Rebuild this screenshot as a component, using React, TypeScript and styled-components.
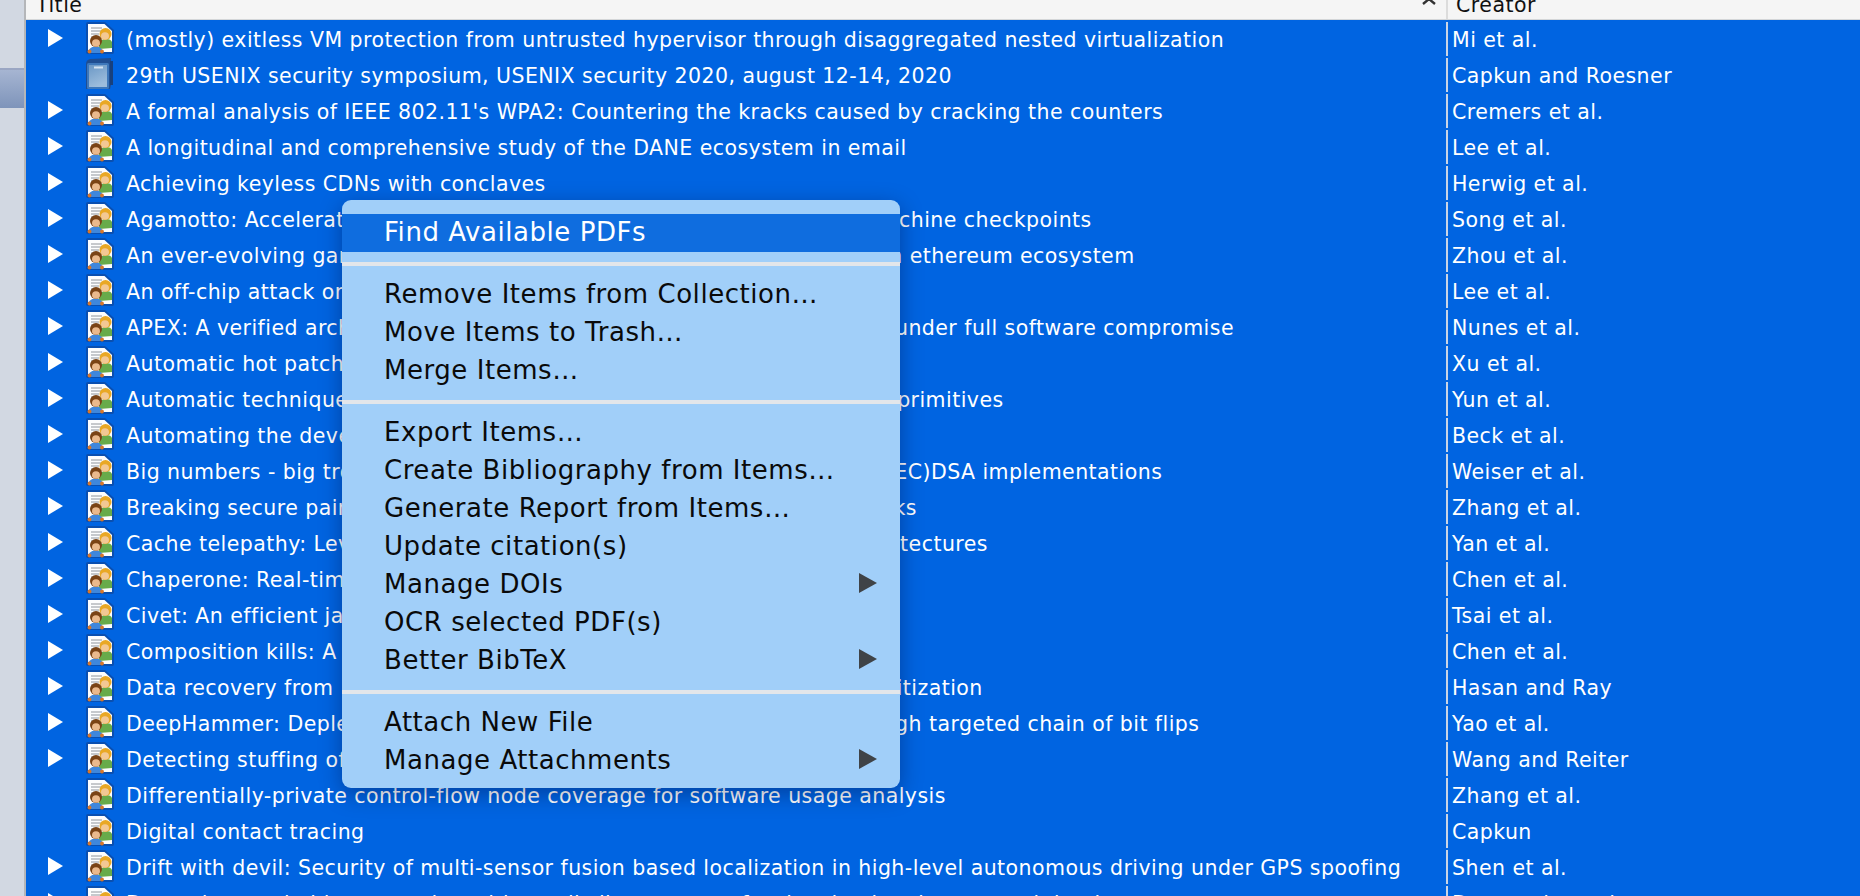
import React from "react";
import styled, { createGlobalStyle } from "styled-components";

const Global = createGlobalStyle`
  html, body { margin: 0; padding: 0; height: 100%; overflow: hidden; background: #0064e1; }
  #root { height: 896px; width: 1860px; }
`;

const font = `"DejaVu Sans", "Liberation Sans", sans-serif`;

const Page = styled.div`
  display: flex;
  width: 1860px;
  height: 896px;
  overflow: hidden;
  position: relative;
  font-family: ${font};
`;
const Sidebar = styled.div`
  width: 24px;
  flex: none;
  background: #d2d8e2;
  border-right: 2px solid #b4b6b9;
  padding-top: 68px;
`;
const SideSelection = styled.div`
  height: 40px;
  background: linear-gradient(#9aa6c3 0, #9aa6c3 2px, #a6b5d2 2px, #7e94ba 100%);
`;
const Main = styled.div`
  flex: 1;
  min-width: 0;
  display: flex;
  flex-direction: column;
`;
const Header = styled.div`
  height: 19px;
  flex: none;
  background: #f5f5f5;
  border-bottom: 1px solid #d4d6d8;
  display: flex;
  overflow: hidden;
`;
const TitleHead = styled.div`
  width: 1420px;
  flex: none;
  display: flex;
  justify-content: space-between;
  padding-left: 10px;
  box-sizing: border-box;
  font-size: 20.5px;
  letter-spacing: 0.5px;
  line-height: 19px;
  color: #111;
  margin-top: -4px;
  height: 23px;
`;
const Caret = styled.svg`
  width: 16px;
  height: 10px;
  margin: 1px 9px 0 0;
`;
const CreatorHead = styled.div`
  border-left: 2px solid #dcdcdc;
  padding-left: 8px;
  font-size: 20.5px;
  letter-spacing: 0.5px;
  line-height: 19px;
  color: #111;
  height: 19px;
`;
const CreatorLabel = styled.span`
  display: block;
  margin-top: -4px;
`;
const List = styled.div`
  flex: 1;
  background: #0064e1;
`;
const Row = styled.div`
  display: flex;
  height: 36px;
  align-items: stretch;
  color: #fff;
  font-size: 20.5px;
  letter-spacing: 0.45px;
`;
const TitleCell = styled.div`
  width: 1420px;
  flex: none;
  display: flex;
  align-items: center;
  white-space: nowrap;
  overflow: hidden;
`;
const TitleText = styled.span`
  padding-top: 4px;
`;
const Twisty = styled.svg`
  width: 15px;
  height: 18px;
  margin-left: 22px;
  flex: none;
`;
const TwistyGap = styled.div`
  width: 15px;
  margin-left: 22px;
  flex: none;
`;
const IconBox = styled.svg`
  width: 28px;
  height: 32px;
  margin-left: 23px;
  margin-right: 12px;
  flex: none;
`;
const CreatorCell = styled.div`
  flex: 1;
  display: flex;
  align-items: center;
  padding: 2px 0 0 4px;
  margin-top: 2px;
  border-left: 2px solid #c9d4e6;
  white-space: nowrap;
`;
const Menu = styled.div`
  position: absolute;
  left: 342px;
  top: 200px;
  width: 558px;
  height: 588px;
  box-sizing: border-box;
  padding-top: 14px;
  background: #a1cff9;
  border-radius: 9px;
  box-shadow: 0 6px 22px rgba(0, 0, 40, 0.35);
  font-size: 26px;
  letter-spacing: 0.55px;
  color: #0a0a0a;
`;
const MenuItem = styled.div<{ $active?: boolean }>`
  height: 38px;
  box-sizing: border-box;
  padding: 0 23px 2px 42px;
  display: flex;
  align-items: center;
  justify-content: space-between;
  white-space: nowrap;
  background: ${(p) => (p.$active ? "#0f6ddf" : "transparent")};
  color: ${(p) => (p.$active ? "#fff" : "#0a0a0a")};
`;
const Separator = styled.div`
  height: 4px;
  background: #e3e6ea;
  margin: 10px 0;
`;
const SubArrow = styled.svg`
  width: 18px;
  height: 20px;
  flex: none;
  margin-bottom: 2px;
`;

const PersonIcon = () => (
  <IconBox viewBox="0 0 28 32">
    <path d="M0 2 Q0 0 2 0 H19 L28 8 V30 Q28 32 26 32 H2 Q0 32 0 30 Z" fill="#0a4fb0" />
    <path d="M2 2 H18.5 L26 9 V30 H2 Z" fill="#fcfdfe" />
    <path d="M5 6 H16 M5 9 H15 M5 12 H13 M5 15 H10" stroke="#b4b8bd" strokeWidth="1.7" />
    <path d="M13 27 L13 21 Q15 17 20 17 Q25 17 26 20 L26 26 Z" fill="#67ab4a" />
    <circle cx="19.5" cy="12" r="6" fill="#e9a825" />
    <ellipse cx="19" cy="14" rx="4" ry="3.8" fill="#f3c894" />
    <path d="M2.5 31 Q2 25 9.5 24.5 Q17 25 17 31 Z" fill="#3f87dc" />
    <circle cx="10" cy="19" r="6" fill="#7a4315" />
    <ellipse cx="10" cy="21" rx="4" ry="3.8" fill="#eab98c" />
    <circle cx="3.5" cy="29.5" r="1.9" fill="#d9772a" />
    <circle cx="16" cy="29.5" r="1.9" fill="#d9772a" />
  </IconBox>
);
const BookIcon = () => (
  <IconBox viewBox="0 0 28 32">
    <defs>
      <linearGradient id="bookFill" x1="0" y1="0" x2="0.4" y2="1">
        <stop offset="0" stopColor="#6b98c6" />
        <stop offset="1" stopColor="#9dbddc" />
      </linearGradient>
    </defs>
    <path d="M0 6 Q0 2 4 1 L25 0 V27 L24 31 H0 Z" fill="#1f4e92" />
    <rect x="1" y="5" width="22" height="26" rx="1.5" fill="#3e78bb" />
    <rect x="3" y="7" width="18" height="22" fill="url(#bookFill)" />
    <rect x="8" y="8.5" width="9" height="2" fill="#d6e4f1" />
    <rect x="24" y="3" width="3" height="24" fill="#18407c" />
  </IconBox>
);
const TwistyIcon = () => (
  <Twisty viewBox="0 0 15 18">
    <path d="M0 0 L15 9 L0 18 Z" fill="#fff" />
  </Twisty>
);

type Item = { t: string; c: string; twisty?: boolean; book?: boolean };
const rows: Item[] = [
  { t: "(mostly) exitless VM protection from untrusted hypervisor through disaggregated nested virtualization", c: "Mi et al.", twisty: true },
  { t: "29th USENIX security symposium, USENIX security 2020, august 12-14, 2020", c: "Capkun and Roesner", book: true },
  { t: "A formal analysis of IEEE 802.11's WPA2: Countering the kracks caused by cracking the counters", c: "Cremers et al.", twisty: true },
  { t: "A longitudinal and comprehensive study of the DANE ecosystem in email", c: "Lee et al.", twisty: true },
  { t: "Achieving keyless CDNs with conclaves", c: "Herwig et al.", twisty: true },
  { t: "Agamotto: Accelerating kernel driver fuzzing with lightweight virtual machine checkpoints", c: "Song et al.", twisty: true },
  { t: "An ever-evolving game: Evaluation of real-world attacks and defenses in ethereum ecosystem", c: "Zhou et al.", twisty: true },
  { t: "An off-chip attack on hardware enclaves via the memory bus", c: "Lee et al.", twisty: true },
  { t: "APEX: A verified architecture for proofs of execution on remote devices under full software compromise", c: "Nunes et al.", twisty: true },
  { t: "Automatic hot patch generation for android kernels", c: "Xu et al.", twisty: true },
  { t: "Automatic techniques to systematically discover new heap exploitation primitives", c: "Yun et al.", twisty: true },
  { t: "Automating the development of chosen ciphertext side-channel attacks", c: "Beck et al.", twisty: true },
  { t: "Big numbers - big troubles: Systematically analyzing nonce leakage in (EC)DSA implementations", c: "Weiser et al.", twisty: true },
  { t: "Breaking secure pairing of bluetooth low energy using downgrade attacks", c: "Zhang et al.", twisty: true },
  { t: "Cache telepathy: Leveraging shared resource attacks to learn DNN architectures", c: "Yan et al.", twisty: true },
  { t: "Chaperone: Real-time locking and loss prevention for smartphones", c: "Chen et al.", twisty: true },
  { t: "Civet: An efficient java partitioning framework for hardware enclaves", c: "Tsai et al.", twisty: true },
  { t: "Composition kills: A case study of email sender authentication", c: "Chen et al.", twisty: true },
  { t: "Data recovery from 'scrubbed' NAND flash storage: Need for analog sanitization", c: "Hasan and Ray", twisty: true },
  { t: "DeepHammer: Depleting the intelligence of deep neural networks through targeted chain of bit flips", c: "Yao et al.", twisty: true },
  { t: "Detecting stuffing of a user's credentials at her own accounts", c: "Wang and Reiter", twisty: true },
  { t: "Differentially-private control-flow node coverage for software usage analysis", c: "Zhang et al." },
  { t: "Digital contact tracing", c: "Capkun" },
  { t: "Drift with devil: Security of multi-sensor fusion based localization in high-level autonomous driving under GPS spoofing", c: "Shen et al.", twisty: true },
  { t: "Dynamic searchable encryption with small client storage for the cloud and encrypted databases", c: "Demertzis et al.", twisty: true },
];

const ArrowIcon = () => (
  <SubArrow viewBox="0 0 18 20">
    <path d="M0 0 L18 10 L0 20 Z" fill="#3f4347" />
  </SubArrow>
);

export default function App() {
  return (
    <Page>
      <Global />
      <Sidebar>
        <SideSelection />
      </Sidebar>
      <Main>
        <Header>
          <TitleHead>
            <span>Title</span>
            <Caret viewBox="0 0 16 10">
              <path d="M2 7 L8 2 L14 7" fill="none" stroke="#333" strokeWidth="2.4" />
            </Caret>
          </TitleHead>
          <CreatorHead>
            <CreatorLabel>Creator</CreatorLabel>
          </CreatorHead>
        </Header>
        <List>
          {rows.map((r) => (
            <Row key={r.t}>
              <TitleCell>
                {r.twisty ? <TwistyIcon /> : <TwistyGap />}
                {r.book ? <BookIcon /> : <PersonIcon />}
                <TitleText>{r.t}</TitleText>
              </TitleCell>
              <CreatorCell>{r.c}</CreatorCell>
            </Row>
          ))}
        </List>
      </Main>
      <Menu>
        <MenuItem $active>Find Available PDFs</MenuItem>
        <Separator />
        <MenuItem>Remove Items from Collection…</MenuItem>
        <MenuItem>Move Items to Trash…</MenuItem>
        <MenuItem>Merge Items…</MenuItem>
        <Separator />
        <MenuItem>Export Items…</MenuItem>
        <MenuItem>Create Bibliography from Items…</MenuItem>
        <MenuItem>Generate Report from Items…</MenuItem>
        <MenuItem>Update citation(s)</MenuItem>
        <MenuItem>Manage DOIs<ArrowIcon /></MenuItem>
        <MenuItem>OCR selected PDF(s)</MenuItem>
        <MenuItem>Better BibTeX<ArrowIcon /></MenuItem>
        <Separator />
        <MenuItem>Attach New File</MenuItem>
        <MenuItem>Manage Attachments<ArrowIcon /></MenuItem>
      </Menu>
    </Page>
  );
}
